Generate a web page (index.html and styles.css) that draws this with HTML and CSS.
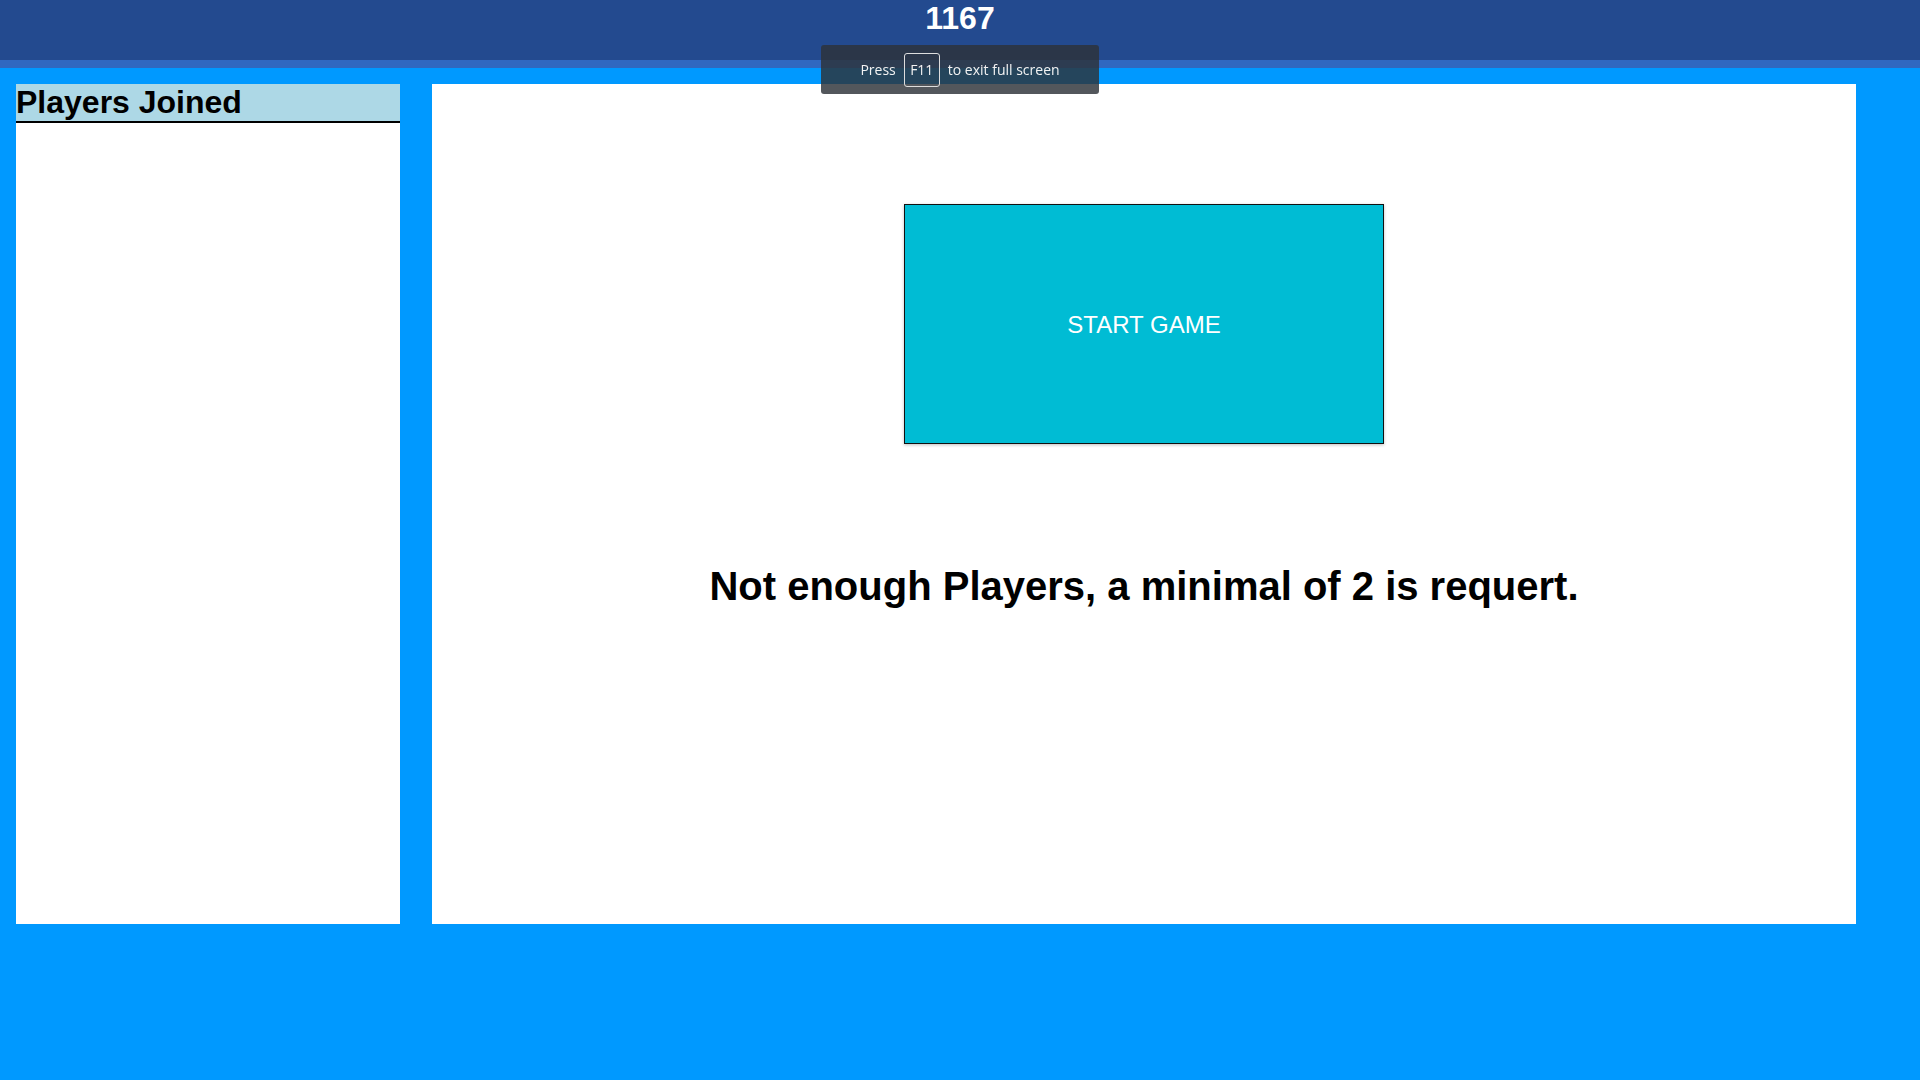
FILE: index.html
```html
<!DOCTYPE html>
<html lang="en">
<head>
<meta charset="utf-8">
<title>Lobby 1167</title>
<link rel="stylesheet" href="styles.css">
</head>
<body>
<header class="topbar">
  <h1 class="room-code">1167</h1>
</header>
<div class="layout">
  <aside class="players">
    <h2 class="players-title">Players Joined</h2>
    <ul class="players-list"></ul>
  </aside>
  <main class="stage">
    <button class="start-btn">START GAME</button>
    <h2 class="message">Not enough Players, a minimal of 2 is requert.</h2>
  </main>
</div>
<div class="fs-toast">
  <span>Press</span>
  <span class="key">F11</span>
  <span>to exit full screen</span>
</div>
</body>
</html>
```
FILE: styles.css
```css
html, body {
  margin: 0;
  padding: 0;
}
body {
  background: #0099ff;
  font-family: "Liberation Sans", Arial, sans-serif;
  width: 1920px;
  height: 1080px;
  overflow: hidden;
}
.topbar {
  height: 60px;
  background: #234a8f;
  border-bottom: 8px solid #3068c0;
}
.room-code {
  margin: 0;
  font-size: 32px;
  font-weight: bold;
  color: #ffffff;
  text-align: center;
  line-height: 37px;
}
.layout {
  display: flex;
  gap: 32px;
  padding: 16px 64px 0 16px;
}
.players {
  width: 384px;
  height: 840px;
  background: #ffffff;
}
.players-title {
  margin: 0;
  font-size: 32px;
  font-weight: bold;
  color: #000;
  background: #add8e6;
  line-height: 37px;
  border-bottom: 2px solid #000;
}
.players-list {
  margin: 0;
  padding: 0;
  list-style: none;
}
.stage {
  flex: 1;
  height: 840px;
  background: #ffffff;
  display: flex;
  flex-direction: column;
  align-items: center;
}
.start-btn {
  margin-top: 120px;
  width: 480px;
  height: 240px;
  box-sizing: border-box;
  background: #00bcd4;
  border: 1px solid #111;
  box-shadow: 0 1px 3px rgba(0, 0, 0, 0.25);
  color: #ffffff;
  font-family: "Liberation Sans", Arial, sans-serif;
  font-size: 24px;
  padding: 2px 0 0 0;
}
.message {
  margin: 119px 0 0 0;
  font-size: 40px;
  font-weight: bold;
  color: #000;
  line-height: 46px;
}
.fs-toast {
  position: fixed;
  top: 45px;
  left: 50%;
  transform: translateX(-50%);
  width: 278px;
  height: 49px;
  box-sizing: border-box;
  background: rgba(45, 50, 56, 0.82);
  border-radius: 3px;
  display: flex;
  align-items: center;
  justify-content: center;
  gap: 8px;
  color: #f2f2f2;
  font-family: "Open Sans", "Noto Sans", sans-serif;
  font-size: 14px;
}
.key {
  display: inline-flex;
  align-items: center;
  justify-content: center;
  width: 36px;
  height: 34px;
  box-sizing: border-box;
  border: 1px solid #dddddd;
  border-radius: 3px;
}
```
